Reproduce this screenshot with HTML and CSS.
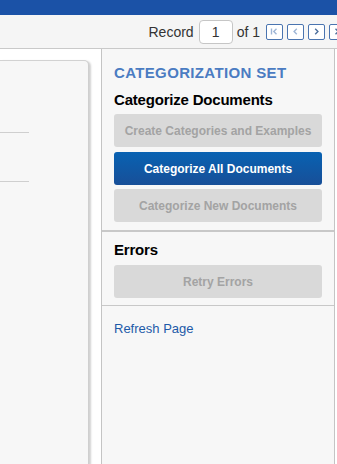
FILE: index.html
```html
<!DOCTYPE html>
<html lang="en">
<head>
  <meta charset="UTF-8">
  <title>Categorization Set</title>
  <link rel="stylesheet" href="styles.css">
</head>
<body>
  <div class="topbar"></div>
  <div class="toolbar">
    <span class="label">Record</span>
    <input class="record" type="text" value="1">
    <span class="label of">of 1</span>
    <div class="pager">
      <button class="pg">
        <svg width="9" height="7" viewBox="0 0 9 7"><path d="M1.5 0.5v6" stroke="#9fb6d6" stroke-width="1.4"/><path d="M6.5 0.8L3.8 3.5l2.7 2.7" fill="none" stroke="#9fb6d6" stroke-width="1.4"/></svg>
      </button>
      <button class="pg">
        <svg width="9" height="7" viewBox="0 0 9 7"><path d="M5.8 0.8L3.1 3.5l2.7 2.7" fill="none" stroke="#9fb6d6" stroke-width="1.4"/></svg>
      </button>
      <button class="pg">
        <svg width="9" height="7" viewBox="0 0 9 7"><path d="M3.2 0.8l2.7 2.7-2.7 2.7" fill="none" stroke="#4d6f9c" stroke-width="1.4"/></svg>
      </button>
      <button class="pg">
        <svg width="9" height="7" viewBox="0 0 9 7"><path d="M2.5 0.8l2.7 2.7-2.7 2.7" fill="none" stroke="#4d6f9c" stroke-width="1.4"/><path d="M7.5 0.5v6" stroke="#4d6f9c" stroke-width="1.4"/></svg>
      </button>
    </div>
  </div>

  <div class="main">
    <div class="left">
      <div class="card">
        <div class="rule first"></div>
        <div class="rule"></div>
      </div>
    </div>

    <div class="side">
      <div class="section">
        <div class="set-title">CATEGORIZATION SET</div>
        <div class="heading">Categorize Documents</div>
        <button class="btn" disabled>Create Categories and Examples</button>
        <button class="btn primary">Categorize All Documents</button>
        <button class="btn" disabled>Categorize New Documents</button>
      </div>
      <div class="section errors">
        <div class="heading">Errors</div>
        <button class="btn" disabled>Retry Errors</button>
      </div>
      <div class="section links">
        <a href="#" class="link">Refresh Page</a>
      </div>
    </div>
  </div>
</body>
</html>
```

FILE: styles.css
```css
html, body {
  height: 100%;
}

body {
  margin: 0;
  font-family: "Liberation Sans", Arial, sans-serif;
  background: #fff;
  display: flex;
  flex-direction: column;
  overflow: hidden;
}

.topbar {
  height: 15px;
  background: #1b52a7;
  flex: none;
}

.toolbar {
  flex: none;
  height: 33px;
  background: #f5f5f5;
  border-bottom: 1px solid #c9c9c9;
  display: flex;
  align-items: center;
  justify-content: flex-end;
  overflow: hidden;
}

.label {
  font-size: 14px;
  color: #333;
}

.record {
  width: 34px;
  height: 24px;
  box-sizing: border-box;
  margin: 0 4px 0 5px;
  border: 1px solid #c6c6c6;
  border-radius: 4px;
  text-align: center;
  font-family: inherit;
  font-size: 14px;
  color: #333;
  padding: 0;
}

.of {
  margin-right: 6px;
}

.pager {
  display: flex;
  gap: 4px;
  margin-right: -9px;
}

.pg {
  width: 17px;
  height: 16px;
  box-sizing: border-box;
  border: 1px solid #4a74b0;
  border-radius: 2px;
  background: #fff;
  padding: 0;
  display: flex;
  align-items: center;
  justify-content: center;
}

.main {
  flex: 1;
  display: flex;
  min-height: 0;
  padding-right: 2px;
}

.left {
  width: 101px;
  flex: none;
  padding-top: 11px;
  box-sizing: border-box;
}

.card {
  width: 89px;
  height: 100%;
  box-sizing: border-box;
  background: #f7f7f7;
  border-top: 1px solid #d2d2d2;
  border-right: 1px solid #cfcfcf;
  border-top-right-radius: 5px;
  box-shadow: 2px 1px 2px rgba(0, 0, 0, 0.18);
  padding-top: 71px;
}

.rule {
  width: 29px;
  height: 1px;
  background: #cfcfcf;
  margin-bottom: 48px;
}

.side {
  flex: 1;
  background: #f7f7f7;
  border-left: 1px solid #c4c4c4;
  border-right: 1px solid #c4c4c4;
}

.section {
  padding: 0 12px 8px;
}

.section:first-child {
  padding-top: 15px;
  border-bottom: 2px solid #c8c8c8;
}

.errors {
  padding-top: 9px;
  padding-bottom: 7px;
  border-bottom: 1px solid #c8c8c8;
}

.links {
  padding-top: 13px;
}

.set-title {
  font-size: 15px;
  font-weight: bold;
  color: #4b7cc2;
  line-height: 18px;
  letter-spacing: 0.35px;
}

.heading {
  font-size: 15px;
  font-weight: bold;
  color: #000;
  line-height: 18px;
  letter-spacing: -0.2px;
  margin-top: 9px;
  margin-bottom: 5px;
}

.errors .heading {
  margin-top: 0;
  margin-bottom: 6px;
}

.btn {
  display: block;
  width: 100%;
  height: 33px;
  margin-top: 5px;
  border: none;
  border-radius: 3px;
  background: #d9d9d9;
  color: #a3a3a3;
  font-family: inherit;
  font-size: 12px;
  font-weight: bold;
}

.heading + .btn {
  margin-top: 0;
}

.primary + .btn {
  margin-top: 4px;
}

.primary {
  background: linear-gradient(#0862b2, #184f98);
  color: #fff;
}

.link {
  font-size: 13px;
  color: #1d5aa8;
  text-decoration: none;
}
```
